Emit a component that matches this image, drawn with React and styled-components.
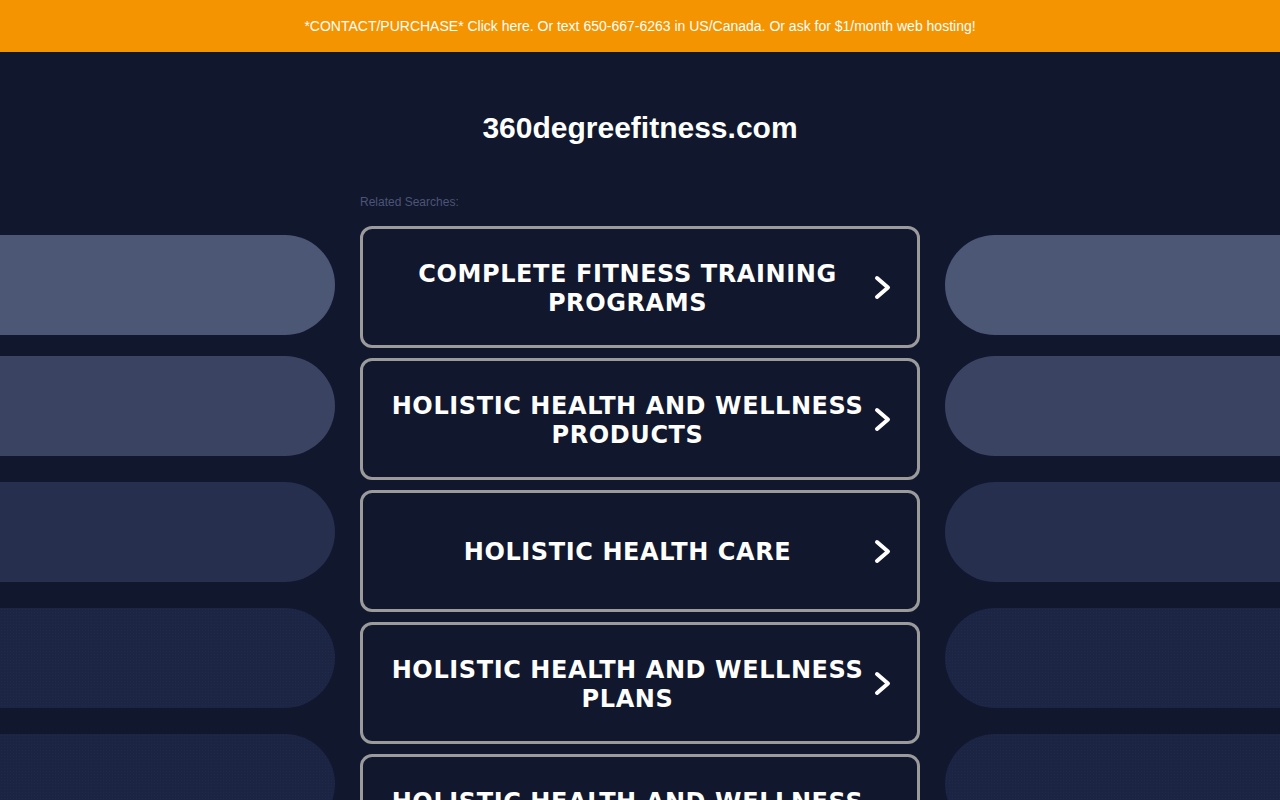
import React from "react";
import styled, { createGlobalStyle } from "styled-components";

const Global = createGlobalStyle`
  html, body { margin: 0; padding: 0; height: 100%; overflow: hidden; }
  body { background: #11172d; font-family: "Liberation Sans", Arial, sans-serif; }
  #root { height: 100%; }
`;

const Page = styled.div`
  display: flex;
  flex-direction: column;
  height: 800px;
  overflow: hidden;
  background: #11172d;
`;

const Banner = styled.a`
  display: flex;
  align-items: center;
  justify-content: center;
  height: 52px;
  flex-shrink: 0;
  background: #f39400;
  color: #ffffff;
  font-family: "Liberation Sans", Arial, sans-serif;
  font-size: 14px;
  text-decoration: none;
`;

const Main = styled.div`
  display: grid;
  grid-template-columns: 335px 560px 335px;
  column-gap: 25px;
  flex: 1;
  overflow: hidden;
`;

const SideCol = styled.div`
  display: flex;
  flex-direction: column;
  padding-top: 183px;
`;

const Pill = styled.div`
  height: 100px;
  flex-shrink: 0;
  margin-top: ${(p) => p.$mt}px;
  background-color: ${(p) => p.$color};
  border-radius: ${(p) => (p.$side === "left" ? "0 50px 50px 0" : "50px 0 0 50px")};
  ${(p) =>
    p.$dots
      ? `background-image: radial-gradient(rgba(50,60,95,0.22) 0.6px, transparent 0.8px);
         background-size: 3px 3px;`
      : ""}
`;

const Center = styled.div`
  display: flex;
  flex-direction: column;
`;

const Title = styled.h1`
  margin: 59px 0 0;
  text-align: center;
  color: #ffffff;
  font-family: "Liberation Sans", Arial, sans-serif;
  font-weight: 700;
  font-size: 30px;
  line-height: 34px;
`;

const Label = styled.div`
  margin-top: 50px;
  color: #4b5577;
  font-family: "Liberation Sans", Arial, sans-serif;
  font-size: 12px;
  line-height: 14px;
`;

const List = styled.div`
  display: flex;
  flex-direction: column;
  gap: 10px;
  margin-top: 17px;
`;

const Item = styled.a`
  display: flex;
  align-items: center;
  box-sizing: border-box;
  height: 122px;
  flex-shrink: 0;
  padding: 0 26px 0 18px;
  border: 3px solid #9b9b9b;
  border-radius: 12px;
  background: #11172d;
  text-decoration: none;
  cursor: pointer;
`;

const ItemText = styled.span`
  flex: 1;
  padding-top: 3px;
  text-align: center;
  color: #ffffff;
  font-family: "DejaVu Sans", Tahoma, sans-serif;
  font-weight: 700;
  font-size: 24px;
  line-height: 29px;
  letter-spacing: 0.6px;
  text-transform: uppercase;
`;

const Chevron = styled.svg`
  width: 17px;
  height: 25px;
  flex-shrink: 0;
`;

const items = [
  "Complete Fitness Training Programs",
  "Holistic Health and Wellness Products",
  "Holistic Health Care",
  "Holistic Health and Wellness Plans",
  "Holistic Health and Wellness Services",
];

const pills = [
  { color: "#4c5675", mt: 0 },
  { color: "#3a4462", mt: 21 },
  { color: "#262f4e", mt: 26 },
  { color: "#1d2545", mt: 26, dots: true },
  { color: "#1c2444", mt: 26, dots: true },
];

function Side({ side }) {
  return (
    <SideCol>
      {pills.map((p, i) => (
        <Pill key={i} $side={side} $color={p.color} $mt={p.mt} $dots={p.dots} />
      ))}
    </SideCol>
  );
}

export default function App() {
  return (
    <Page>
      <Global />
      <Banner href="#">
        *CONTACT/PURCHASE* Click here. Or text 650-667-6263 in US/Canada. Or ask for $1/month web hosting!
      </Banner>
      <Main>
        <Side side="left" />
        <Center>
          <Title>360degreefitness.com</Title>
          <Label>Related Searches:</Label>
          <List>
            {items.map((t) => (
              <Item key={t} href="#">
                <ItemText>{t}</ItemText>
                <Chevron viewBox="0 0 17 25">
                  <polyline
                    points="3,3 14,12.5 3,22"
                    fill="none"
                    stroke="#ffffff"
                    strokeWidth="4"
                    strokeLinecap="round"
                    strokeLinejoin="round"
                  />
                </Chevron>
              </Item>
            ))}
          </List>
        </Center>
        <Side side="right" />
      </Main>
    </Page>
  );
}
